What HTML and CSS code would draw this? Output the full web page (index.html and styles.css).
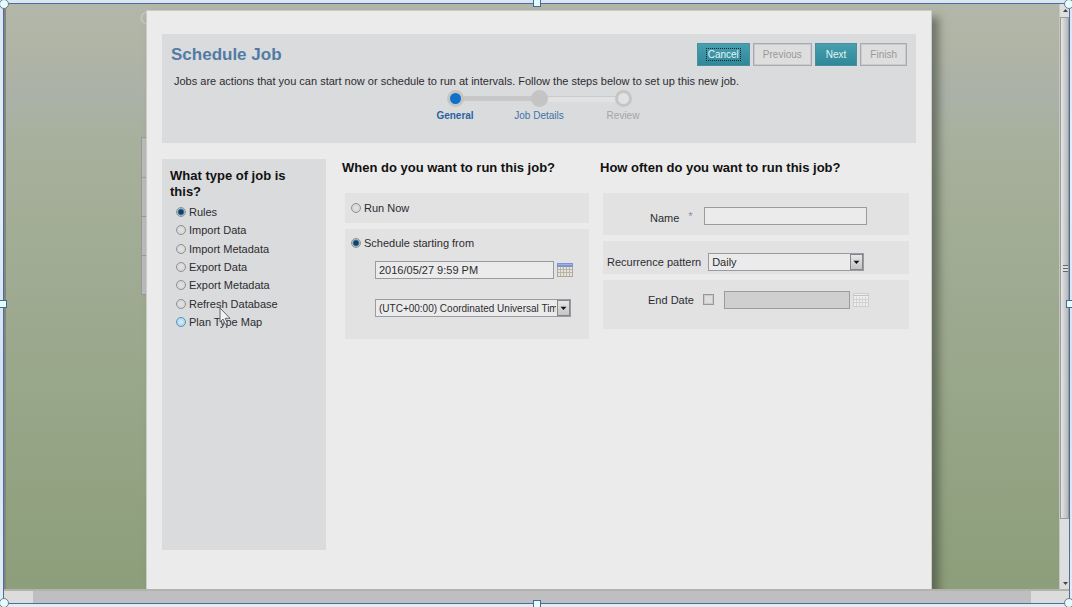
FILE: index.html
```html
<!DOCTYPE html>
<html lang="en">
  <head>
    <meta charset="utf-8" />
    <meta name="viewport" content="width=device-width, initial-scale=1.0" />
    <title>Schedule Job</title>
    <link rel="stylesheet" href="styles.css">
  </head>
  <body>
    <div class="frame">
      <div class="stage">
        <span class="back-letter">C</span>
        <div class="back-table"><i></i><i></i><i></i><i></i></div>
        <main class="dialog">
          <header class="dialog-header">
            <div class="title-row">
              <h1>Schedule Job</h1>
              <div class="buttons">
                <button class="btn primary focused" type="button"><span>Cancel</span></button>
                <button class="btn" type="button" disabled>Previous</button>
                <button class="btn primary" type="button">Next</button>
                <button class="btn" type="button" disabled>Finish</button>
              </div>
            </div>
            <p class="intro">Jobs are actions that you can start now or schedule to run at intervals. Follow the steps below to set up this new job.</p>
            <ol class="steps">
              <li class="step current"><span class="dot"></span>General</li>
              <li class="step next"><span class="dot"></span>Job Details</li>
              <li class="step last"><span class="dot"></span>Review</li>
            </ol>
          </header>

          <form class="columns">
            <section class="job-type">
              <h2>What type of job is this?</h2>
              <div class="type-list">
                <label><input type="radio" name="type" checked>Rules</label>
                <label><input type="radio" name="type">Import Data</label>
                <label><input type="radio" name="type">Import Metadata</label>
                <label><input type="radio" name="type">Export Data</label>
                <label><input type="radio" name="type">Export Metadata</label>
                <label><input type="radio" name="type">Refresh Database</label>
                <label><input class="hot" type="radio" name="type">Plan Type Map</label>
              </div>
            </section>

            <section class="when">
              <h2>When do you want to run this job?</h2>
              <div class="panel run-now">
                <label><input type="radio" name="when">Run Now</label>
              </div>
              <div class="panel schedule">
                <label><input type="radio" name="when" checked>Schedule starting from</label>
                <div class="date-row">
                  <input class="field" type="text" aria-label="Start date" value="2016/05/27 9:59 PM">
                  <svg class="calendar" viewBox="0 0 16 14" width="16" height="14">
                    <rect x="0.5" y="0.5" width="15" height="13" fill="#e6e4da" stroke="#aaa79d"/>
                    <path d="M1 6.5h14M1 9.5h14M3.5 4v9M6.5 4v9M9.5 4v9M12.5 4v9" stroke="#b9b5a6" fill="none"/>
                    <rect width="16" height="4" fill="#7d93d2"/>
                    <path d="M1 1.5h14" stroke="#a3b3e4"/>
                  </svg>
                </div>
                <div class="select zone">
                  <select aria-label="Time zone"><option>(UTC+00:00) Coordinated Universal Time</option></select>
                  <svg class="arrow" viewBox="0 0 13 15" width="13" height="15"><path d="M3 6h7L6.5 10z" fill="#111"/></svg>
                </div>
              </div>
            </section>

            <section class="how-often">
              <h2>How often do you want to run this job?</h2>
              <div class="panel name-row">
                <label for="name">Name</label><span class="star">*</span>
                <input class="field" id="name" type="text">
              </div>
              <div class="panel pattern-row">
                <label for="pattern">Recurrence pattern</label>
                <div class="select">
                  <select id="pattern"><option>Daily</option></select>
                  <svg class="arrow" viewBox="0 0 13 15" width="13" height="15"><path d="M3 6h7L6.5 10z" fill="#111"/></svg>
                </div>
              </div>
              <div class="panel end-row">
                <label for="has-end">End Date</label>
                <input id="has-end" type="checkbox">
                <input class="field" type="text" aria-label="End date value" disabled>
                <svg class="calendar" viewBox="0 0 16 14" width="16" height="14">
                  <rect x="0.5" y="0.5" width="15" height="13" fill="#ededed" stroke="#cfcfcf"/>
                  <path d="M1 6.5h14M1 9.5h14M3.5 4v9M6.5 4v9M9.5 4v9M12.5 4v9" stroke="#d2d2d2" fill="none"/>
                  <path d="M0 2.5h16" stroke="#c2c2c2"/>
                </svg>
              </div>
            </section>
          </form>
        </main>
      </div>
      <div class="vscroll">
        <svg viewBox="0 0 10 13" width="10" height="13"><path d="M3 8h5L5.500 5z" fill="#444"/></svg>
        <div class="vthumb"><span></span></div>
        <svg viewBox="0 0 10 13" width="10" height="13"><path d="M3 6h5L5.500 9z" fill="#444"/></svg>
      </div>
      <div class="hscroll"><div class="hthumb"></div></div>

      <span class="handle round top left"></span>
      <span class="handle top center"></span>
      <span class="handle round top right"></span>
      <span class="handle middle left"></span>
      <span class="handle middle right"></span>
      <span class="handle round bottom left"></span>
      <span class="handle bottom center"></span>
      <span class="handle round bottom right"></span>
      <svg class="pointer" viewBox="0 0 12 19" width="12" height="19">
        <path d="M1 1v14l3-3 2.500 5.500 2-1L6.200 11.300H11z" fill="#f2f2f2" stroke="#666"/>
      </svg>
    </div>
  </body>
</html>
```

FILE: styles.css
```css
* {
  box-sizing: border-box;
}

html {
  overflow: hidden;
}

body {
  margin: 0;
  padding: 3px 2px 3px 3px;
  height: 100vh;
  background: linear-gradient(#dde5f3, #e8eef8 30%, #d5e1f3 60%, #e4ebf2);
  font-family: "Liberation Sans", Arial, sans-serif;
  font-size: 11px;
  color: #2c2c30;
}

h1,
h2,
p,
ol {
  margin: 0;
  padding: 0;
}

/* selection frame round the window */
.frame {
  position: relative;
  display: grid;
  grid-template-columns: 1fr 10px;
  grid-template-rows: 1fr 14px;
  height: 100%;
  border: 1px solid #44719f;
}

.stage {
  position: relative;
  overflow: hidden;
  display: flex;
  padding: 6px 127px 0 140px;
  border-left: 2px solid #82867e;
  background: linear-gradient(#b2b7a9, #b0b4a5 8%, #abb1a8 16%, #a7b09c 24%, #93a383 80%, #8c9e7a);
}

.back-letter {
  position: absolute;
  left: 134px;
  top: 6px;
  font-size: 16px;
  color: #c3c6c0;
}

.back-table {
  position: absolute;
  left: 135px;
  top: 133px;
  width: 20px;
  border: 1px solid #969a94;
  background: #b9bab9;
}

.back-table i {
  display: block;
  height: 39px;
}

.back-table i + i {
  border-top: 1px solid #999c98;
}

.dialog {
  position: relative;
  flex: 1;
  padding: 23px 15px 0;
  border: 1px solid #c9cbc7;
  border-bottom: 0;
  background: #ebebeb;
  box-shadow: 7px 7px 8px rgba(50, 55, 45, 0.5);
}

.dialog-header {
  height: 109px;
  padding: 9px 9px 0;
  background: #dadbdd;
}

.title-row {
  display: flex;
  justify-content: space-between;
}

h1 {
  font-size: 17px;
  line-height: 24px;
  color: #527ba4;
}

.buttons {
  display: flex;
  gap: 3px;
}

.btn {
  height: 23px;
  padding: 0 9px;
  border: 1px solid #a9aab0;
  background: #dedede;
  box-shadow: inset 0 0 0 1px #c9cacd;
  font-family: inherit;
  font-size: 10px;
  color: #999;
}

.btn.primary {
  padding: 0 10px;
  border-color: #4a8fa0;
  background: linear-gradient(#46a0b0, #2f8798);
  box-shadow: none;
  color: #e6f3f5;
}

.btn.focused {
  padding: 0 9px;
}

.btn.focused span {
  display: block;
  padding: 0 1px;
  outline: 1px dotted #123;
}

.intro {
  margin-top: 7px;
  padding-left: 3px;
  line-height: 14px;
}

.steps {
  display: grid;
  grid-template-columns: repeat(3, 84px);
  justify-content: center;
  list-style: none;
}

.step {
  position: relative;
  display: flex;
  flex-direction: column;
  align-items: center;
  margin-top: 2px;
  font-size: 10px;
  line-height: 18px;
  color: #a4a5a7;
}

.dot {
  z-index: 1;
  width: 17px;
  height: 17px;
  border: 3px solid #c5c5c6;
  border-radius: 50%;
  background: #c4c4c5;
}

.current {
  font-weight: bold;
  color: #2a639f;
}

.current .dot {
  background: #1170c8;
}

.next {
  color: #3f73a8;
}

.last .dot {
  background: #e2e2e3;
}

/* bar that joins a step to the one after it */
.step:not(.last)::after {
  content: "";
  position: absolute;
  left: 50%;
  top: 6px;
  width: 100%;
  height: 5px;
  background: #c8c8c9;
}

.step.next::after {
  border-top: 1px solid #cacacb;
  background: #e2e2e3;
}

.columns {
  display: grid;
  grid-template-columns: 164px 247px 1fr;
  column-gap: 16px;
  align-items: start;
  margin-top: 16px;
}

h2 {
  padding-top: 1px;
  font-size: 13px;
  line-height: 16px;
  color: #111;
}

label {
  display: flex;
  align-items: center;
}

.job-type {
  height: 391px;
  padding: 8px;
  background: #dadbdd;
}

.type-list {
  display: grid;
  align-content: space-between;
  height: 122px;
  margin-top: 6px;
  padding-left: 6px;
}

.when h2,
.how-often h2 {
  margin-bottom: 17px;
}

.how-often {
  margin-left: -5px;
  padding-right: 7px;
}

input[type="radio"] {
  appearance: none;
  width: 10px;
  height: 10px;
  margin: 0 3px 0 0;
  border: 1px solid #8e9094;
  border-radius: 50%;
  background: radial-gradient(#e4e4e4, #cfcfcf);
}

input[type="radio"]:checked {
  background: radial-gradient(circle, #1b3f60 0 2px, #4386ad 3px, #d8dde0 4px);
}

input[type="radio"].hot {
  border-color: #5a93b8;
  background: radial-gradient(#d8eef9, #9bcce8);
}

.panel {
  margin: 0 0 6px 3px;
  background: #e2e2e2;
}

.run-now {
  height: 30px;
  padding: 9px 6px;
}

.schedule {
  height: 110px;
  padding: 8px 6px;
}

.field {
  height: 18px;
  padding: 0 3px;
  border: 1px solid #999aa3;
  background: #ebebeb;
  font-family: inherit;
  font-size: 11px;
  color: #2c2c30;
}

.date-row {
  display: flex;
  align-items: center;
  gap: 3px;
  margin: 12px 0 0 24px;
}

.date-row .field {
  width: 179px;
}

.select {
  position: relative;
  width: 156px;
}

.select select {
  display: block;
  appearance: none;
  width: 100%;
  height: 18px;
  padding: 0 14px 0 3px;
  border: 1px solid #999aa3;
  border-radius: 0;
  background: #ebebeb;
  font-family: inherit;
  font-size: 11px;
  color: #2c2c30;
}

.select.zone {
  width: 196px;
  margin: 20px 0 0 24px;
}

.select.zone select {
  font-size: 10px;
}

.arrow {
  position: absolute;
  top: 1px;
  right: 1px;
  height: 16px;
  border: 1px solid #85868c;
  background: linear-gradient(#e6e6e6, #c4c4c4);
}

.name-row,
.pattern-row,
.end-row {
  display: flex;
}

.name-row {
  align-items: center;
  height: 42px;
  padding: 4px 0 0 47px;
}

.name-row label {
  padding-top: 3px;
}

.name-row .field {
  width: 163px;
  margin-left: 11px;
}

.star {
  margin-left: 9px;
  color: #7d8fb9;
}

.pattern-row {
  align-items: center;
  gap: 7px;
  height: 33px;
  padding: 8px 0 0 4px;
}

.end-row {
  align-items: flex-start;
  height: 49px;
  padding: 11px 0 0 45px;
}

.end-row label {
  line-height: 18px;
}

.end-row .field {
  width: 126px;
  margin: 0 3px 0 10px;
}

.end-row .field:disabled {
  background: #cfcfcf;
}

.end-row .calendar {
  margin-top: 2px;
}

input[type="checkbox"] {
  appearance: none;
  width: 11px;
  height: 11px;
  margin: 3px 0 0 9px;
  border: 1px solid #96979b;
  background: #dedede;
  box-shadow: inset 0 0 0 1px #cacaca;
}

/* scroll bars */
.vscroll {
  display: flex;
  flex-direction: column;
  border-left: 1px solid #c4c6c2;
  background: #dedede;
}

.vthumb {
  display: flex;
  align-items: center;
  height: 502px;
  border: 1px solid #9a9b9d;
  background: linear-gradient(to right, #e6e6e6, #b7b8ba);
}

.vthumb + svg {
  margin-top: auto;
}

.vthumb span {
  width: 5px;
  height: 7px;
  margin-left: 2px;
  background: repeating-linear-gradient(#666 0 1px, #ddd 1px 3px);
}

.hscroll {
  grid-column: 1 / 3;
  padding: 0 38px 0 29px;
  border-top: 2px solid #b2b3ae;
  background: #dcdcdc;
}

.hthumb {
  height: 100%;
  background: #bfbfc1;
}

/* resize handles */
.handle {
  position: absolute;
  width: 8px;
  height: 8px;
  border: 1px solid #3f6c98;
  background: #e6fbfd;
}

.handle.round {
  width: 10px;
  height: 10px;
  border-color: #6b7d86;
  border-radius: 50%;
}

.top {
  top: -5px;
}

.bottom {
  bottom: -5px;
}

.left {
  left: -5px;
}

.right {
  right: -5px;
}

.center {
  left: calc(50% - 4px);
}

.middle {
  top: calc(50% - 4px);
}

.pointer {
  position: absolute;
  left: 215px;
  top: 303px;
}
```
